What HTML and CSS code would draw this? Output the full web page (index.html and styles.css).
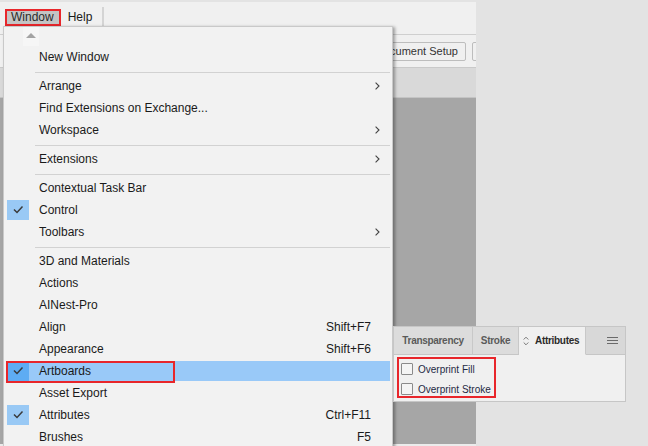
FILE: index.html
```html
<!DOCTYPE html>
<html>
<head>
<meta charset="utf-8">
<link rel="stylesheet" href="styles.css">
</head>
<body>
<div class="screen">
  <div class="app">
    <div class="topstrip"></div>
    <div class="menubar">
      <div class="mb-item mb-active">Window</div>
      <div class="mb-item mb-help">Help</div>
      <div class="mb-sep"></div>
    </div>
    <div class="gap"></div>
    <div class="controlbar">
      <div class="btn">Document Setup</div>
      <div class="btn btn-wide"></div>
    </div>
    <div class="tabrow"></div>
    <div class="canvas"></div>
    <div class="bottomstrip"></div>
  </div>
  <div class="rest"></div>

  <div class="menu">
    <div class="menu-top"><div class="uparrow-box"><span class="uparrow"></span></div></div>
    <div class="item"><span class="chk"></span><span class="lbl">New Window</span><span class="sc"></span><span class="sub"></span></div>
    <div class="sep"></div>
    <div class="item"><span class="chk"></span><span class="lbl">Arrange</span><span class="sc"></span><span class="sub"><svg width="5" height="8" viewBox="0 0 5 8"><polyline points="0.6,0.6 4,4 0.6,7.4" fill="none" stroke="#444" stroke-width="1.1"/></svg></span></div>
    <div class="item"><span class="chk"></span><span class="lbl">Find Extensions on Exchange...</span><span class="sc"></span><span class="sub"></span></div>
    <div class="item"><span class="chk"></span><span class="lbl">Workspace</span><span class="sc"></span><span class="sub"><svg width="5" height="8" viewBox="0 0 5 8"><polyline points="0.6,0.6 4,4 0.6,7.4" fill="none" stroke="#444" stroke-width="1.1"/></svg></span></div>
    <div class="sep"></div>
    <div class="item"><span class="chk"></span><span class="lbl">Extensions</span><span class="sc"></span><span class="sub"><svg width="5" height="8" viewBox="0 0 5 8"><polyline points="0.6,0.6 4,4 0.6,7.4" fill="none" stroke="#444" stroke-width="1.1"/></svg></span></div>
    <div class="sep"></div>
    <div class="item"><span class="chk"></span><span class="lbl">Contextual Task Bar</span><span class="sc"></span><span class="sub"></span></div>
    <div class="item"><span class="chk on"><svg width="22" height="20" viewBox="0 0 22 20"><polyline points="7,9.5 10,12.5 15.5,6.5" fill="none" stroke="#3a3a3a" stroke-width="1.5"/></svg></span><span class="lbl">Control</span><span class="sc"></span><span class="sub"></span></div>
    <div class="item"><span class="chk"></span><span class="lbl">Toolbars</span><span class="sc"></span><span class="sub"><svg width="5" height="8" viewBox="0 0 5 8"><polyline points="0.6,0.6 4,4 0.6,7.4" fill="none" stroke="#444" stroke-width="1.1"/></svg></span></div>
    <div class="sep"></div>
    <div class="item"><span class="chk"></span><span class="lbl">3D and Materials</span><span class="sc"></span><span class="sub"></span></div>
    <div class="item"><span class="chk"></span><span class="lbl">Actions</span><span class="sc"></span><span class="sub"></span></div>
    <div class="item"><span class="chk"></span><span class="lbl">AINest-Pro</span><span class="sc"></span><span class="sub"></span></div>
    <div class="item"><span class="chk"></span><span class="lbl">Align</span><span class="sc">Shift+F7</span><span class="sub"></span></div>
    <div class="item"><span class="chk"></span><span class="lbl">Appearance</span><span class="sc">Shift+F6</span><span class="sub"></span></div>
    <div class="item hl"><span class="chk on"><svg width="22" height="20" viewBox="0 0 22 20"><polyline points="7,9.5 10,12.5 15.5,6.5" fill="none" stroke="#3a3a3a" stroke-width="1.5"/></svg></span><span class="lbl">Artboards</span><span class="sc"></span><span class="sub"></span><span class="redbox redbox-item"></span></div>
    <div class="item"><span class="chk"></span><span class="lbl">Asset Export</span><span class="sc"></span><span class="sub"></span></div>
    <div class="item"><span class="chk on"><svg width="22" height="20" viewBox="0 0 22 20"><polyline points="7,9.5 10,12.5 15.5,6.5" fill="none" stroke="#3a3a3a" stroke-width="1.5"/></svg></span><span class="lbl">Attributes</span><span class="sc">Ctrl+F11</span><span class="sub"></span></div>
    <div class="item"><span class="chk"></span><span class="lbl">Brushes</span><span class="sc">F5</span><span class="sub"></span></div>
  </div>

  <div class="panel">
    <div class="ptabs">
      <div class="ptab t1">Transparency</div>
      <div class="ptab t2">Stroke</div>
      <div class="ptab t3 active"><svg class="updown" width="6" height="10" viewBox="0 0 6 10"><polyline points="0.7,3.5 3,1.2 5.3,3.5" fill="none" stroke="#777" stroke-width="1"/><polyline points="0.7,6.5 3,8.8 5.3,6.5" fill="none" stroke="#777" stroke-width="1"/></svg>Attributes</div>
      <div class="ptab-fill"><svg width="11" height="8" viewBox="0 0 11 8"><rect x="0" y="0" width="11" height="1" fill="#6a6a6a"/><rect x="0" y="3" width="11" height="1" fill="#6a6a6a"/><rect x="0" y="6" width="11" height="1" fill="#6a6a6a"/></svg></div>
    </div>
    <div class="pbody">
      <div class="prow"><span class="cb"></span><span class="plabel">Overprint Fill</span></div>
      <div class="prow"><span class="cb"></span><span class="plabel">Overprint Stroke</span></div>
    </div>
    <span class="redbox redbox-panel"></span>
  </div>
</div>
</body>
</html>
```

FILE: styles.css
```css
* { box-sizing: border-box; }
html, body { margin: 0; padding: 0; }
body {
  width: 648px;
  height: 446px;
  overflow: hidden;
  font-family: "Liberation Sans", Arial, sans-serif;
  color: #1a1a1a;
  background: #e3e3e3;
}
.screen {
  position: relative;
  width: 648px;
  height: 446px;
  display: flex;
}
.app {
  width: 476px;
  height: 446px;
  display: flex;
  flex-direction: column;
  background: #f0f0f0;
}
.rest { flex: 1; background: #e3e3e3; }
.topstrip { height: 2px; background: #e3e3e3; }
.menubar {
  height: 24px;
  display: flex;
  align-items: flex-end;
  padding-left: 5px;
  font-size: 12px;
}
.mb-item {
  height: 17px;
  line-height: 15px;
  padding: 0 6px 0 5px;
}
.mb-active {
  border: 2px solid #e8262b;
  background: #c4c4c4;
  line-height: 13px;
  padding: 0 5px 0 4px;
  color: #2a2a2a;
}
.mb-help { padding: 0 10px 0 7px; line-height: 16px; }
.mb-sep {
  width: 2px;
  height: 19px;
  background: #d4d4d4;
}
.gap { height: 8px; }
.controlbar {
  height: 34px;
  border-top: 1px solid #cfcfcf;
  border-bottom: 1px solid #c9c9c9;
  display: flex;
  align-items: center;
  gap: 6px;
  padding-left: 369px;
  overflow: hidden;
  white-space: nowrap;
}
.btn {
  flex: none;
  height: 19px;
  line-height: 17px;
  border: 1px solid #bdbdbd;
  border-radius: 2px;
  padding: 0 7px 0 6px;
  font-size: 11px;
  color: #333;
  background: #f0f0f0;
  margin-top: 1px;
}
.btn-wide { width: 80px; }
.tabrow {
  height: 30px;
  background: #d9d9d9;
  border-bottom: 1px solid #c4c4c4;
}
.canvas { flex: 1; background: #a6a6a6; }
.bottomstrip { height: 2px; background: #ececec; }

/* dropdown menu */
.menu {
  position: absolute;
  left: 3px;
  top: 26px;
  width: 390px;
  height: 430px;
  background: #f2f2f2;
  border: 1px solid #c9c9c9;
  box-shadow: 2px 1px 3px rgba(0, 0, 0, 0.35);
  font-size: 12px;
}
.menu-top { height: 19px; display: flex; padding-left: 19px; }
.uparrow-box {
  width: 16px;
  height: 19px;
  background: #f6f6f6;
  display: flex;
  justify-content: center;
  padding-top: 6px;
}
.uparrow {
  width: 0; height: 0;
  border-left: 5px solid transparent;
  border-right: 5px solid transparent;
  border-bottom: 5px solid #a3a3a3;
}
.item {
  position: relative;
  height: 22px;
  display: flex;
  align-items: center;
  white-space: nowrap;
}
.chk {
  width: 31px;
  height: 20px;
  flex: none;
  padding-left: 3px;
  display: flex;
}
.chk.on svg { background: #99c9f5; display: block; }
.lbl { flex: 1; padding-left: 4px; }
.sc { flex: none; text-align: right; }
.sub { width: 21px; flex: none; display: flex; align-items: center; padding-left: 4px; }
.sub svg { display: block; margin-top: -1px; }
.sep {
  height: 7px;
  border-top: 3px solid transparent;
  margin: 0 2px 0 31px;
}
.sep::after {
  content: "";
  display: block;
  height: 1px;
  background: #d2d2d2;
  margin-top: 1px;
}
.item.hl {
  margin: 0 2px;
  border-top: 1px solid transparent;
  border-bottom: 1px solid transparent;
  background: #99c9f8;
  background-clip: padding-box;
}
.item.hl .chk { width: 29px; padding-left: 1px; }
.item.hl .sub { width: 19px; }
.item.hl .chk.on svg { background: #5eacf3; }
.redbox {
  position: absolute;
  border: 2px solid #e8262b;
}
.redbox-item { left: 0; top: 0; width: 169px; height: 22px; }

/* floating panel */
.panel {
  position: absolute;
  left: 393px;
  top: 326px;
  width: 233px;
  height: 76px;
  background: #f0f0f0;
  border: 1px solid #c6c6c6;
  display: flex;
  flex-direction: column;
}
.ptabs {
  height: 28px;
  display: flex;
  font-size: 10px;
  font-weight: bold;
  letter-spacing: -0.3px;
  color: #5a5a5a;
}
.ptab {
  height: 28px;
  background: #dcdcdc;
  border-right: 1px solid #c8c8c8;
  border-bottom: 1px solid #c6c6c6;
  display: flex;
  align-items: center;
  justify-content: center;
}
.t1 { width: 79px; }
.t2 { width: 46px; }
.t3 { width: 67px; }
.ptab.active {
  background: #f0f0f0;
  border-bottom-color: transparent;
  color: #2b2b2b;
  justify-content: flex-start;
  padding-left: 4px;
}
.updown { margin-right: 6px; }
.ptab-fill {
  flex: 1;
  background: #d8d8d8;
  border-bottom: 1px solid #c6c6c6;
  display: flex;
  align-items: center;
  justify-content: flex-end;
  padding-right: 7px;
}
.pbody { flex: 1; padding: 4px 0 0 7px; }
.prow {
  height: 20px;
  display: flex;
  align-items: center;
}
.cb {
  width: 12px;
  height: 12px;
  border: 1px solid #8a8a8a;
  border-radius: 1px;
  background: #f4f4f4;
  margin-right: 5px;
}
.plabel { font-size: 10px; color: #1f2a44; }
.redbox-panel { left: 3px; top: 30px; width: 99px; height: 41px; }
```
